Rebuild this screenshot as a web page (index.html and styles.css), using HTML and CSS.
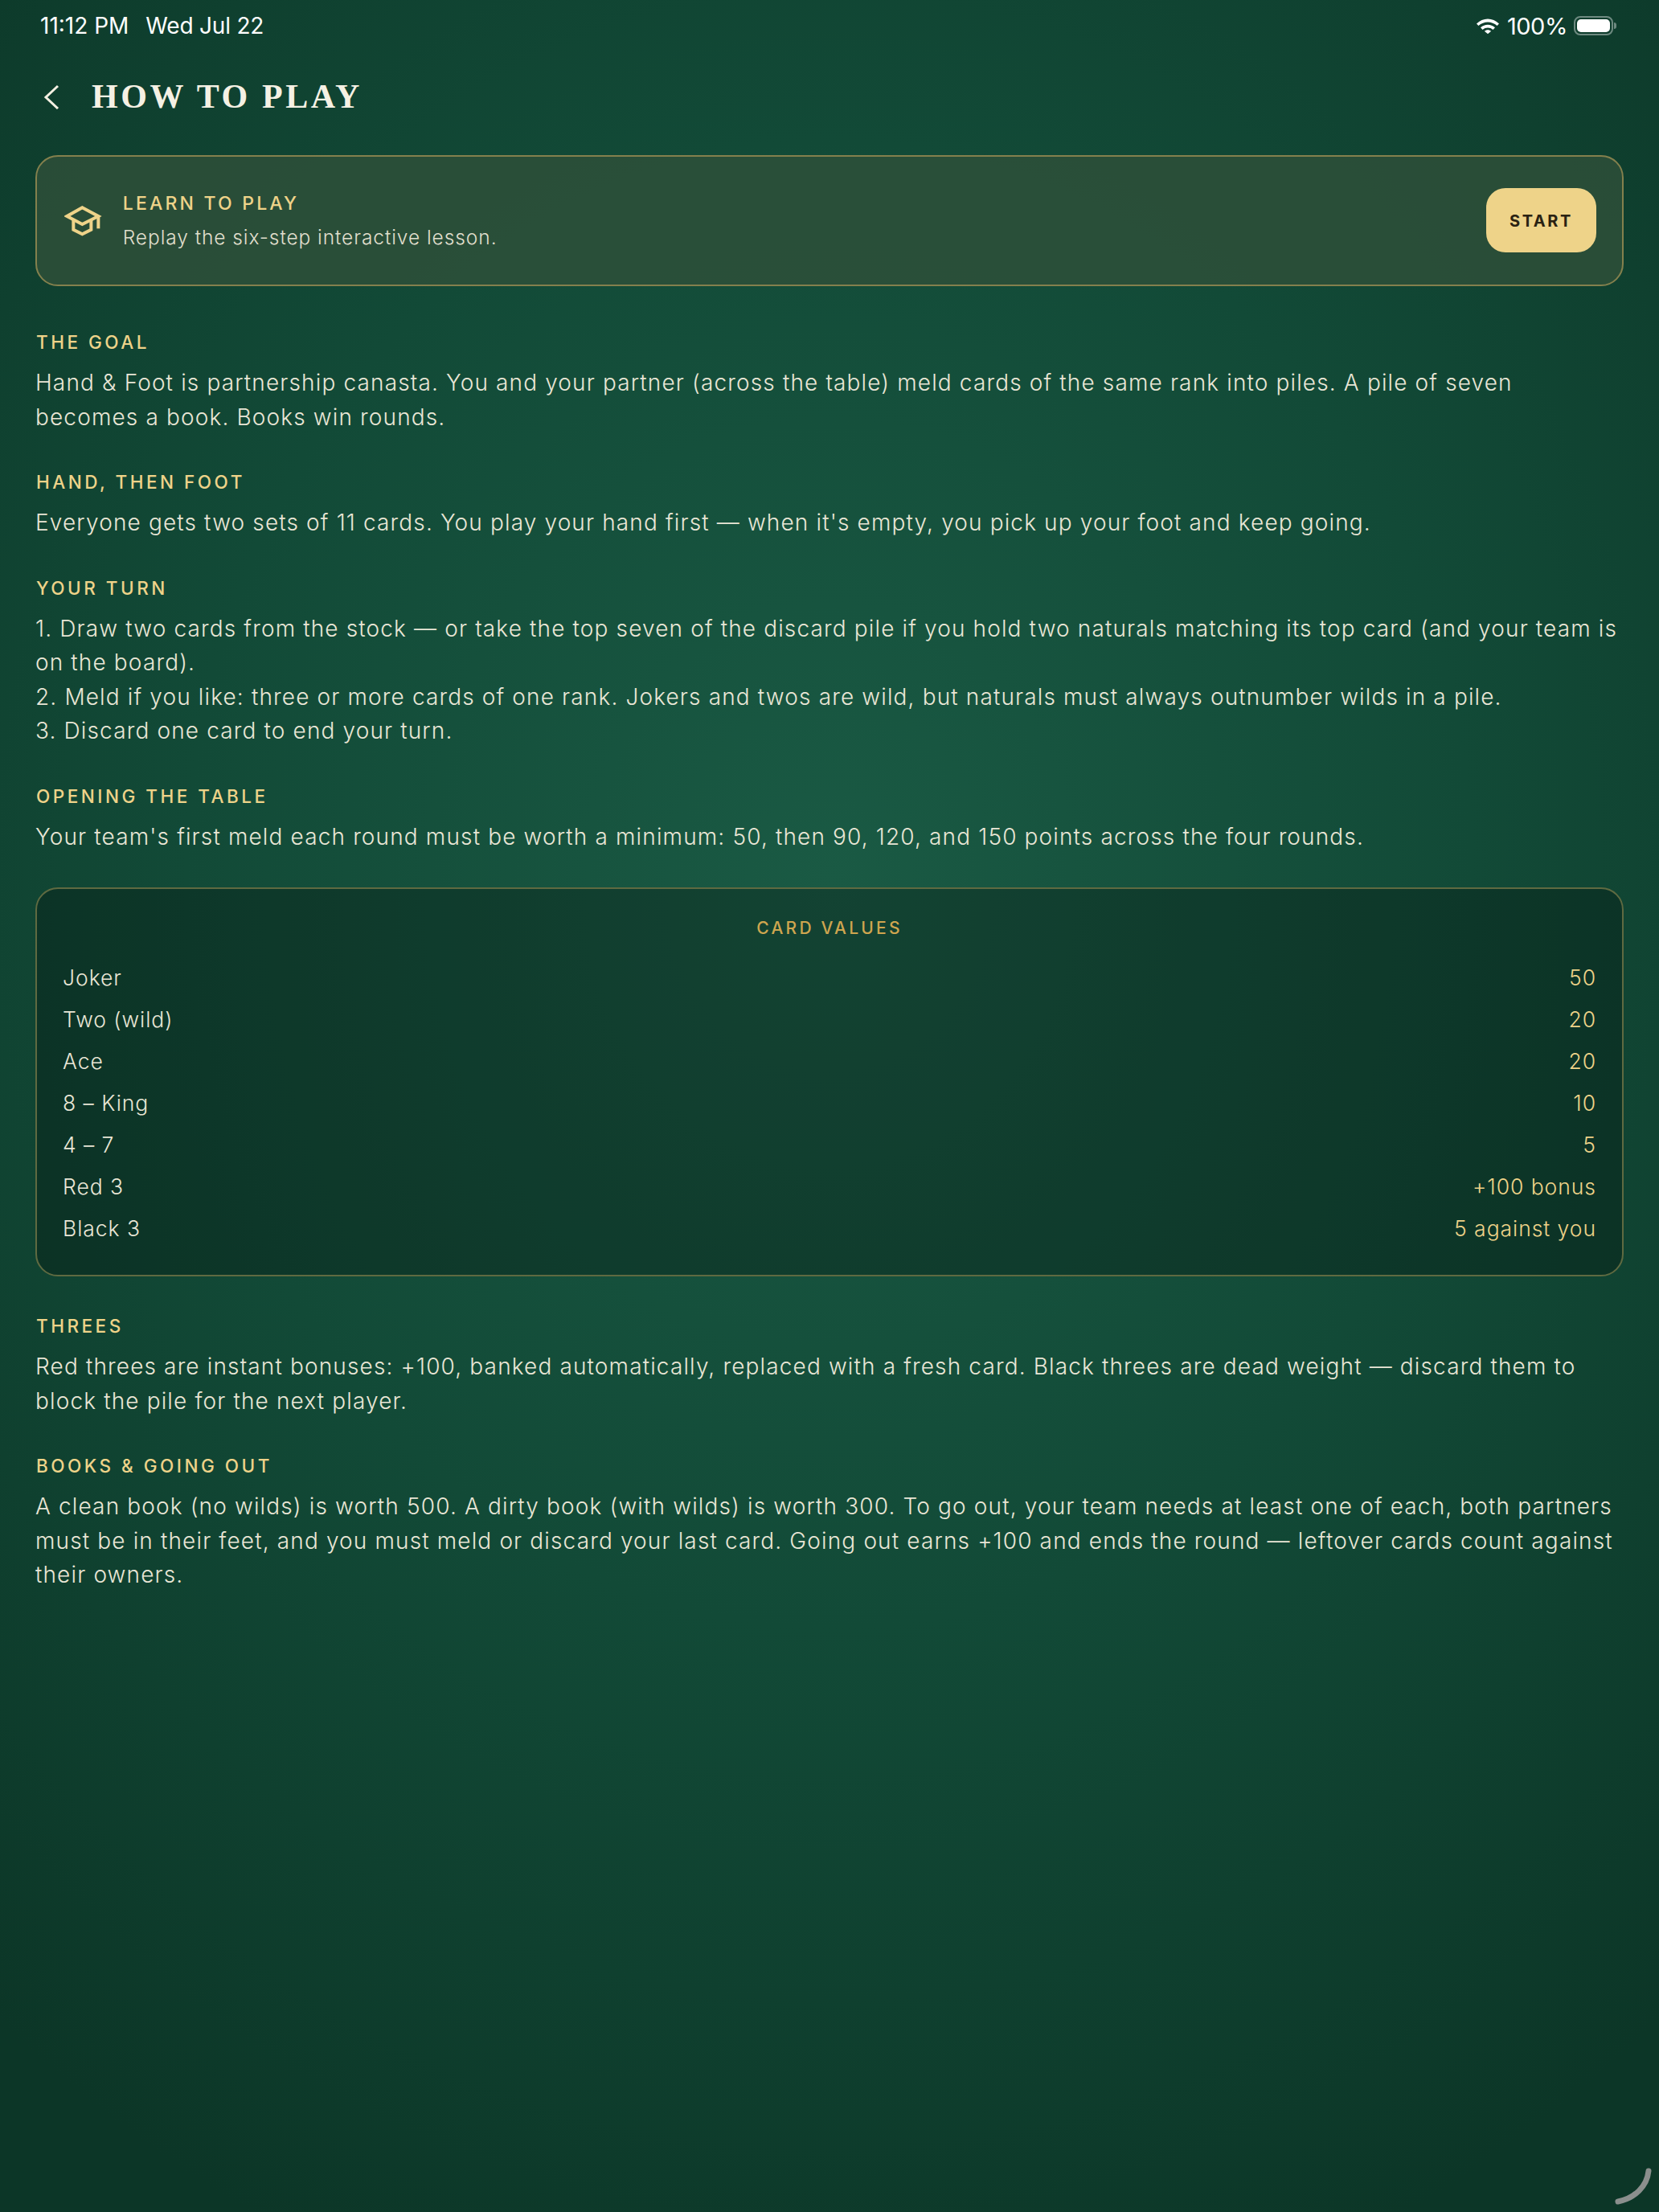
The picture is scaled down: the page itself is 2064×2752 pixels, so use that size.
FILE: index.html
```html
<!DOCTYPE html>
<html lang="en">
<head>
<meta charset="utf-8">
<title>How to Play</title>
<link rel="stylesheet" href="styles.css">
</head>
<body>
<div class="page">
  <header class="status">
    <div class="status-left"><span class="time">11:12 PM</span><span class="date">Wed Jul 22</span></div>
    <div class="status-right">
      <svg class="wifi" viewBox="0 0 28 19"><path d="M0 6.400C7.800 -1.600 20.200 -1.600 28 6.400l-2.400 2.700C18.900 2.900 9.100 2.900 2.400 9.100z"/><path d="M5 11.300c5-4.900 13-4.900 18 0l-2.500 2.600c-3.600-3.300-9.400-3.300-13 0z"/><path d="M9.800 15.800c2.400-2.100 6-2.100 8.400 0L14 19.200z"/></svg>
      <span class="pct">100%</span>
      <span class="battery"><span class="battery-fill"></span></span><span class="battery-cap"></span>
    </div>
  </header>
  <div class="titlebar">
    <svg class="back" viewBox="0 0 20 32"><path d="M18 3 3 17l15 14"/></svg>
    <h1>HOW TO PLAY</h1>
  </div>
  <section class="lesson">
    <svg class="cap" viewBox="28 28 140 120"><path d="M95 38 38 70l57 30 60-30z"/><path d="M62 85v35l33 17 33-17V85"/><path d="M155 70v46"/></svg>
    <div class="lesson-text">
      <div class="lesson-title">LEARN TO PLAY</div>
      <div class="lesson-sub">Replay the six-step interactive lesson.</div>
    </div>
    <button class="start">START</button>
  </section>
  <section class="block">
    <h2>THE GOAL</h2>
    <p>Hand &amp; Foot is partnership canasta. You and your partner (across the table) meld cards of the same rank into piles. A pile of seven becomes a book. Books win rounds.</p>
  </section>
  <section class="block">
    <h2>HAND, THEN FOOT</h2>
    <p>Everyone gets two sets of 11 cards. You play your hand first — when it's empty, you pick up your foot and keep going.</p>
  </section>
  <section class="block">
    <h2>YOUR TURN</h2>
    <p>1. Draw two cards from the stock — or take the top seven of the discard pile if you hold two naturals matching its top card (and your team is on the board).<br>2. Meld if you like: three or more cards of one rank. Jokers and twos are wild, but naturals must always outnumber wilds in a pile.<br>3. Discard one card to end your turn.</p>
  </section>
  <section class="block">
    <h2>OPENING THE TABLE</h2>
    <p>Your team's first meld each round must be worth a minimum: 50, then 90, 120, and 150 points across the four rounds.</p>
  </section>
  <section class="values">
    <h3>CARD VALUES</h3>
    <div class="row"><span>Joker</span><b>50</b></div>
    <div class="row"><span>Two (wild)</span><b>20</b></div>
    <div class="row"><span>Ace</span><b>20</b></div>
    <div class="row"><span>8 – King</span><b>10</b></div>
    <div class="row"><span>4 – 7</span><b>5</b></div>
    <div class="row"><span>Red 3</span><b>+100 bonus</b></div>
    <div class="row"><span>Black 3</span><b>5 against you</b></div>
  </section>
  <section class="block">
    <h2>THREES</h2>
    <p>Red threes are instant bonuses: +100, banked automatically, replaced with a fresh card. Black threes are dead weight — discard them to block the pile for the next player.</p>
  </section>
  <section class="block">
    <h2>BOOKS &amp; GOING OUT</h2>
    <p>A clean book (no wilds) is worth 500. A dirty book (with wilds) is worth 300. To go out, your team needs at least one of each, both partners must be in their feet, and you must meld or discard your last card. Going out earns +100 and ends the round — leftover cards count against their owners.</p>
  </section>
  <svg class="grabber" viewBox="0 0 50 50"><path d="M43 5C41 24 26 39 5 43"/></svg>
</div>
</body>
</html>
```
FILE: styles.css
```css
* { box-sizing: border-box; }
html, body { margin: 0; padding: 0; }
body { width: 2064px; height: 2752px; overflow: hidden; font-family: Inter, "Noto Sans", sans-serif; }
.page {
  position: relative;
  width: 2064px; height: 2752px;
  padding: 0 44px;
  background: radial-gradient(ellipse 1600px 1850px at 1032px 1100px, #1a5a44 0%, #124a37 50%, #0c3627 100%);
  color: #e9e6d6;
}
.status { height: 64px; display: flex; justify-content: space-between; align-items: center; color: #fff; font-size: 28px; font-weight: 400; padding: 0 9px 0 6px; }
.status-left { display: flex; gap: 21px; }
.date { letter-spacing: -.2px; }
.status-right { display: flex; align-items: center; }
.wifi { width: 28px; height: 19px; fill: #fff; margin-right: 10px; }
.pct { width: 72px; font-size: 29px; letter-spacing: -.5px; margin-right: 11px; white-space: nowrap; }
.battery { width: 49px; height: 24px; border: 2px solid rgba(255,255,255,.4); border-radius: 8px; padding: 2px; display: flex; }
.battery-fill { flex: 1; background: #fff; border-radius: 5px; }
.battery-cap { width: 3px; height: 8px; background: rgba(255,255,255,.4); border-radius: 0 3px 3px 0; margin-left: 1px; }
.titlebar { display: flex; align-items: center; height: 80px; margin-top: 16px; gap: 40px; padding-left: 10px; }
.back { width: 20px; height: 32px; fill: none; stroke: #f4f0e2; stroke-width: 3; flex: none; }
h1 { margin: 0; font-family: "Liberation Serif", serif; font-weight: 700; font-size: 42px; letter-spacing: 3.600px; color: #f5f1e4; }
.lesson {
  margin-top: 33px;
  height: 163px;
  display: flex; align-items: center;
  padding: 0 32px 0 34px;
  background: rgba(48, 80, 57, .8);
  border: 2px solid #84804d;
  border-radius: 28px;
}
.cap { width: 46.700px; height: 40px; fill: none; stroke: #eed389; stroke-width: 12; margin-right: 26px; flex: none; }
.lesson-text { flex: 1; }
.lesson-title { font-size: 23px; font-weight: 500; letter-spacing: 3.200px; color: #eed389; line-height: 30px; }
.lesson-sub { font-size: 24.500px; font-weight: 300; letter-spacing: .93px; color: #e0dfcd; line-height: 34px; margin-top: 10px; }
.start { width: 137px; height: 80px; border: 0; border-radius: 24px; background: #eed389; color: #2a2212; font: 700 20px Inter, sans-serif; letter-spacing: 2.600px; margin-top: -2px; padding-top: 3px; }
.block { margin-top: 46px; }
.lesson + .block { margin-top: 56px; }
.block h2 { margin: 0 0 15px 1px; font-size: 22.500px; font-weight: 500; letter-spacing: 3.500px; line-height: 28px; color: #eed389; }
.block p { margin: 0; padding-right: 3px; font-size: 28px; font-weight: 300; letter-spacing: 1.140px; line-height: 42.500px; color: #e9e6d6; }
.values {
  margin-top: 42px;
  height: 484px;
  padding: 31px 32px 0;
  background: rgba(0, 0, 0, .25);
  border: 2px solid #5f6a41;
  border-radius: 28px;
}
.values + .block { margin-top: 48px; }
.values h3 { margin: 0 0 17px; text-align: center; font-size: 21px; font-weight: 500; letter-spacing: 3.200px; line-height: 36px; color: #cfa64f; }
.row { display: flex; justify-content: space-between; align-items: center; height: 52px; font-size: 26.500px; font-weight: 300; letter-spacing: .95px; color: #e9e6d6; }
.row b { font-weight: 300; color: #eed389; }
.grabber { position: absolute; right: 6px; bottom: 6px; width: 50px; height: 50px; fill: none; stroke: #8b8f8d; stroke-width: 7; stroke-linecap: round; }
```
